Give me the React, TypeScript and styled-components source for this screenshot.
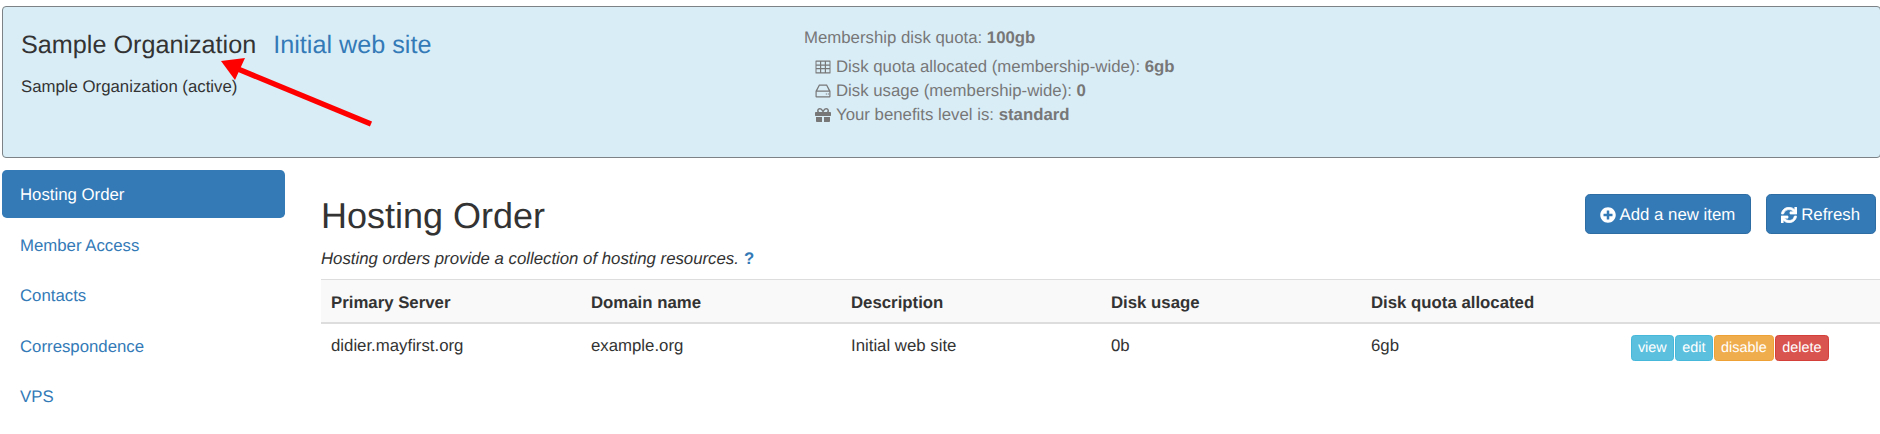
import React from 'react'
import styled, { createGlobalStyle } from 'styled-components'
import { FaGift, FaPlusCircle, FaSync } from 'react-icons/fa'

const GlobalStyle = createGlobalStyle`
  html, body {
    margin: 0;
    padding: 0;
    background: #fff;
    overflow: hidden;
  }
  body {
    font-family: "Liberation Sans", Arial, sans-serif;
    font-size: 16.8px;
    line-height: 24px;
    color: #333;
    text-rendering: geometricPrecision;
  }
  * { box-sizing: border-box; }
`

const Page = styled.div`
  position: relative;
  width: 1880px;
  height: 434px;
  overflow: hidden;
  padding: 6px 0 0 2px;
`

const Panel = styled.header`
  display: flex;
  width: 1879px;
  height: 152px;
  background: #d9edf7;
  border: 1px solid #7c8285;
  border-radius: 4px;
  padding: 17px 18px 0;
`

const OrgColumn = styled.div`
  width: 783px;
`

const OrgTitle = styled.h3`
  margin: 5px 0 0;
  font-size: 25.2px;
  line-height: 32px;
  font-weight: 400;
  color: #333;
`

const OrgLink = styled.a`
  margin-left: 17px;
  color: #337ab7;
`

const OrgStatus = styled.p`
  margin: 14px 0 0;
`

const QuotaColumn = styled.div`
  color: #777;
  padding-top: 2px;
`

const QuotaHead = styled.div`
  height: 29px;
`

const QuotaRow = styled.div`
  display: flex;
  align-items: center;
  height: 24.2px;
  margin-left: 11px;
`

const QuotaIcon = styled.svg`
  width: 16px;
  height: 16px;
  margin-right: 5px;
  fill: #777;
  flex: none;
`

const Body = styled.div`
  display: flex;
  margin-top: 12px;
`

const Sidebar = styled.nav`
  width: 283px;
  flex: none;
  display: flex;
  flex-direction: column;
  gap: 2.4px;
`

const NavItem = styled.a<{ $active?: boolean }>`
  display: block;
  height: 48px;
  padding: 13.4px 18px;
  border-radius: 4.8px;
  color: ${(p) => (p.$active ? '#fff' : '#337ab7')};
  background: ${(p) => (p.$active ? '#337ab7' : 'transparent')};
`

const Content = styled.main`
  width: 1560px;
  flex: none;
  margin-left: 36px;
`

const TitleRow = styled.div`
  display: flex;
  justify-content: space-between;
  height: 109px;
  padding-top: 24px;
`

const Title = styled.h1`
  margin: 2px 0 0;
  font-size: 36px;
  line-height: 40px;
  font-weight: 400;
  color: #333;
`

const Lead = styled.p`
  margin: 11px 0 0;
  font-style: italic;
`

const HelpMark = styled.a`
  margin-left: 5px;
  font-style: normal;
  font-weight: 700;
  color: #337ab7;
`

const Actions = styled.div`
  display: flex;
  gap: 15px;
  margin-right: 5px;
`

const ActionButton = styled.a`
  display: flex;
  align-items: center;
  gap: 4px;
  height: 40px;
  padding: 1px 15px 0 14px;
  color: #fff;
  background: #337ab7;
  border: 1px solid #2e6da4;
  border-radius: 4.8px;
`

const RefreshIcon = styled(FaSync)`
  stroke: currentColor;
  stroke-width: 24px;
`

const OrderTable = styled.table`
  width: 100%;
  table-layout: fixed;
  border-collapse: collapse;
`

const HeadCell = styled.th`
  height: 43px;
  padding: 4px 10px 0;
  text-align: left;
  font-weight: 700;
  background: #f9f9f9;
  border-top: 1px solid #ddd;
  border-bottom: 2px solid #ddd;
`

const Cell = styled.td`
  padding: 10px 10px 0;
  vertical-align: top;
`

const RowActions = styled.div`
  display: flex;
  gap: 1px;
  margin-left: -0.4px;
  margin-top: 1px;
`

const ROW_COLORS = {
  info: ['#5bc0de', '#46b8da'],
  warning: ['#f0ad4e', '#eea236'],
  danger: ['#d9534f', '#d43f3a'],
}

const RowButton = styled.a<{ $kind: keyof typeof ROW_COLORS }>`
  display: block;
  height: 26.4px;
  padding: 0 6.3px;
  font-size: 14.4px;
  line-height: 24.4px;
  color: #fff;
  background: ${(p) => ROW_COLORS[p.$kind][0]};
  border: 1px solid ${(p) => ROW_COLORS[p.$kind][1]};
  border-radius: 3.6px;
`

const Arrow = styled.svg`
  position: absolute;
  left: 0;
  top: 0;
  pointer-events: none;
`

const navItems = ['Hosting Order', 'Member Access', 'Contacts', 'Correspondence', 'VPS']
const columns = ['Primary Server', 'Domain name', 'Description', 'Disk usage', 'Disk quota allocated']
const row = ['didier.mayfirst.org', 'example.org', 'Initial web site', '0b', '6gb']

const GridIcon = () => (
  <QuotaIcon viewBox="0 0 16 16">
    <path d="M1 1.500h14a.5.5 0 0 1 .5.5v12a.5.5 0 0 1-.5.5H1a.5.5 0 0 1-.5-.5V2a.5.5 0 0 1 .5-.5zm.5 1.200V5.500H5V2.700zm4.700 0V5.500h3.600V2.700zm4.800 0V5.500h3.500V2.700zM1.500 6.700v2.400H5V6.700zm4.700 0v2.400h3.600V6.700zm4.800 0v2.400h3.500V6.700zM1.500 10.300v3H5v-3zm4.700 0v3h3.600v-3zm4.800 0v3h3.500v-3z" fillRule="evenodd" />
  </QuotaIcon>
)

const DriveIcon = () => (
  <QuotaIcon viewBox="0 0 16 16">
    <path d="M4 1.500h8L15.500 8v5.500a.9.9 0 0 1-.9.9H1.400a.9.9 0 0 1-.9-.9V8zm.7 1.200L2.300 7.500h11.400L11.300 2.700zM1.700 8.700v4.500h12.600V8.700zM10.800 10.500h1.100v1.100h-1.100zm2 0h1.100v1.100h-1.100z" fillRule="evenodd" />
  </QuotaIcon>
)

export default function App() {
  return (
    <Page>
      <GlobalStyle />
      <Panel>
        <OrgColumn>
          <OrgTitle>
            Sample Organization<OrgLink>Initial web site</OrgLink>
          </OrgTitle>
          <OrgStatus>Sample Organization (active)</OrgStatus>
        </OrgColumn>
        <QuotaColumn>
          <QuotaHead>
            Membership disk quota: <b>100gb</b>
          </QuotaHead>
          <QuotaRow>
            <GridIcon />
            <span>
              Disk quota allocated (membership-wide): <b>6gb</b>
            </span>
          </QuotaRow>
          <QuotaRow>
            <DriveIcon />
            <span>
              Disk usage (membership-wide): <b>0</b>
            </span>
          </QuotaRow>
          <QuotaRow>
            <QuotaIcon as={FaGift} />
            <span>
              Your benefits level is: <b>standard</b>
            </span>
          </QuotaRow>
        </QuotaColumn>
      </Panel>
      <Body>
        <Sidebar>
          {navItems.map((item, i) => (
            <NavItem key={item} $active={i === 0}>
              {item}
            </NavItem>
          ))}
        </Sidebar>
        <Content>
          <TitleRow>
            <div>
              <Title>Hosting Order</Title>
              <Lead>
                Hosting orders provide a collection of hosting resources.<HelpMark>?</HelpMark>
              </Lead>
            </div>
            <Actions>
              <ActionButton>
                <FaPlusCircle size={16} />
                Add a new item
              </ActionButton>
              <ActionButton>
                <RefreshIcon size={16} />
                Refresh
              </ActionButton>
            </Actions>
          </TitleRow>
          <OrderTable>
            <thead>
              <tr>
                {columns.map((c) => (
                  <HeadCell key={c}>{c}</HeadCell>
                ))}
                <HeadCell />
              </tr>
            </thead>
            <tbody>
              <tr>
                {row.map((c) => (
                  <Cell key={c}>{c}</Cell>
                ))}
                <Cell>
                  <RowActions>
                    <RowButton $kind="info">view</RowButton>
                    <RowButton $kind="info">edit</RowButton>
                    <RowButton $kind="warning">disable</RowButton>
                    <RowButton $kind="danger">delete</RowButton>
                  </RowActions>
                </Cell>
              </tr>
            </tbody>
          </OrderTable>
        </Content>
      </Body>
      <Arrow width="1880" height="434" viewBox="0 0 1880 434">
        <line x1="371" y1="124" x2="238" y2="69" stroke="#ff0000" strokeWidth="5.500" />
        <polygon points="221,61 245,58 235,80" fill="#ff0000" />
      </Arrow>
    </Page>
  )
}
